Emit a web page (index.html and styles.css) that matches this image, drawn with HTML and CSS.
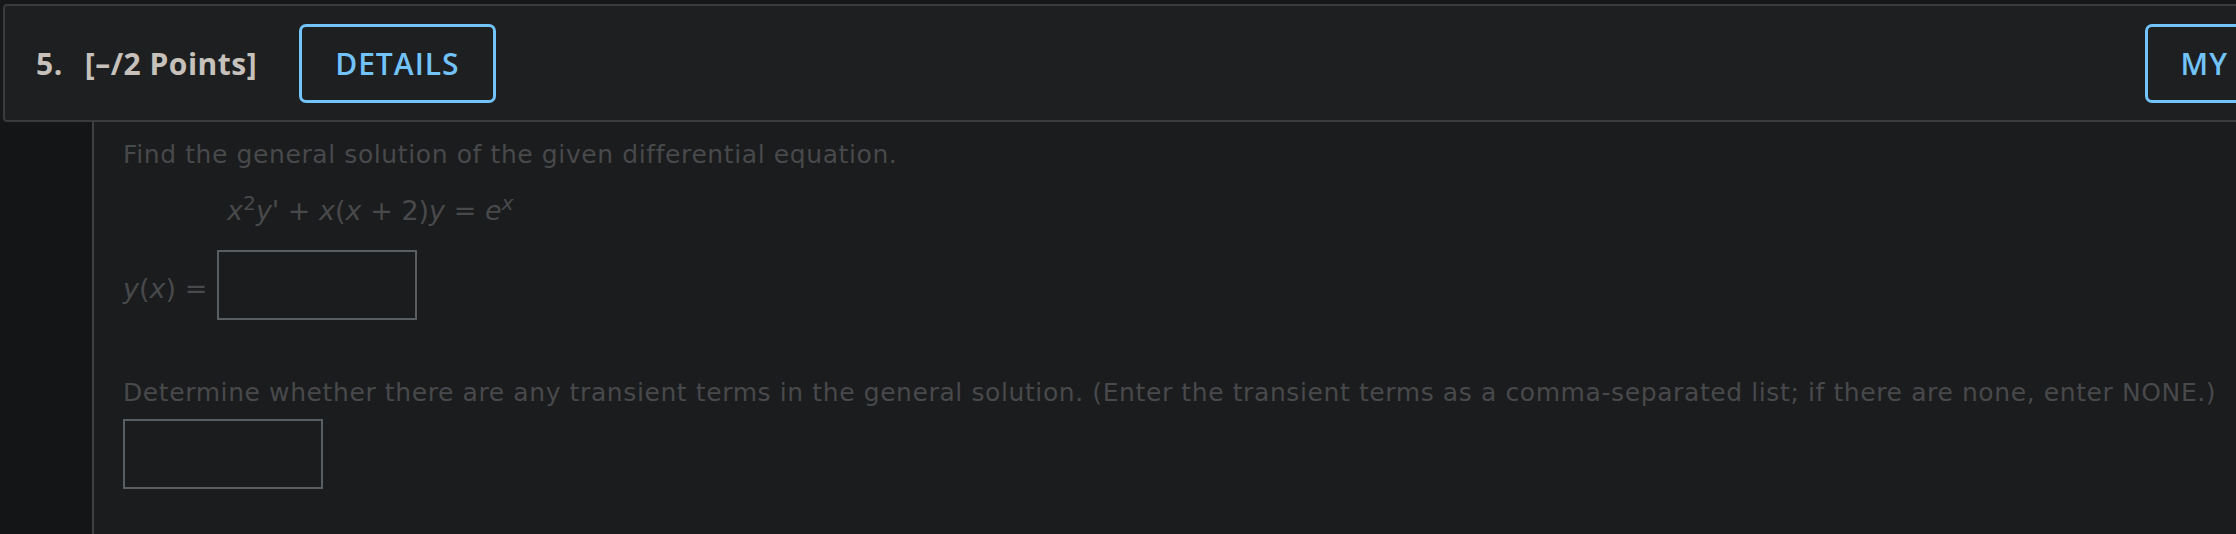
FILE: index.html
```html
<!DOCTYPE html>
<html lang="en">
<head>
  <meta charset="UTF-8">
  <meta name="viewport" content="width=device-width, initial-scale=1.0">
  <title>Question 5</title>
  <link rel="stylesheet" href="styles.css">
</head>
<body>

  <div class="question-head">
    <span class="q-number">5.</span>
    <span class="q-points">[–/2 Points]</span>
    <button class="head-btn details">DETAILS</button>
    <button class="head-btn notes">MY NOTES</button>
  </div>

  <div class="question-body">
    <div class="gutter"></div>

    <div class="content">
      <p class="prompt">Find the general solution of the given differential equation.</p>

      <p class="equation">
        <i>x</i><sup>2</sup><i>y</i>' + <i>x</i>(<i>x</i> + 2)<i>y</i> = <i>e</i><sup><i>x</i></sup>
      </p>

      <div class="answer-row">
        <span class="answer-label"><i>y</i>(<i>x</i>) =</span>
        <input type="text" class="answer-box">
      </div>

      <p class="prompt second">Determine whether there are any transient terms in the general solution. (Enter the transient terms as a comma-separated list; if there are none, enter NONE.)</p>
      <input type="text" class="answer-box">
    </div>
  </div>

</body>
</html>
```

FILE: styles.css
```css
body {
  margin: 0;
  background-color: #161719;
  overflow: hidden;
  font-family: "DejaVu Sans", Verdana, sans-serif;
}

/* Cabecera de la pregunta */
.question-head {
  box-sizing: border-box;
  width: 2410px;
  height: 118px;
  margin: 4px 0 0 3px;
  padding-left: 31px;
  display: flex;
  align-items: center;
  background-color: #1e1f21;
  border: 2px solid #3a3b3d;
  border-radius: 4px;
}

.q-number,
.q-points {
  font-family: "Open Sans", sans-serif;
  font-weight: 700;
  font-size: 30px;
  letter-spacing: 0.5px;
  color: #c6c1bb;
}

.q-points {
  margin-left: 22px;
}

.head-btn {
  box-sizing: border-box;
  height: 79px;
  padding: 0 33px;
  font-family: "Open Sans", sans-serif;
  font-weight: 600;
  font-size: 30px;
  letter-spacing: 1px;
  color: #72c3f9;
  background-color: transparent;
  border: 3px solid #72c3f9;
  border-radius: 7px;
}

.details {
  margin-left: 42px;
}

.notes {
  margin-left: auto;
  margin-right: 36px;
}

/* Cuerpo */
.question-body {
  display: flex;
  height: 412px;
}

.gutter {
  width: 92px;
  background-color: #141517;
  border-right: 2px solid #3d4144;
}

.content {
  flex: 1;
  padding: 18px 0 0 29px;
  background-color: #1b1c1e;
  color: #48494b;
  font-size: 25px;
  line-height: 30px;
}

.prompt {
  margin: 0;
  letter-spacing: 0.6px;
}

.equation {
  margin: 24px 0 0 104px;
  font-size: 27px;
  line-height: 34px;
}

.equation sup {
  font-size: 0.75em;
  line-height: 0;
  vertical-align: 0.5em;
}

.answer-row {
  display: flex;
  align-items: flex-end;
  gap: 10px;
  margin-top: 22px;
}

.answer-label {
  font-size: 27px;
  line-height: 34px;
  margin-bottom: 14px;
}

.answer-box {
  display: block;
  box-sizing: border-box;
  width: 200px;
  height: 70px;
  margin: 0;
  background-color: #1b1c1e;
  border: 2px solid #595e62;
}

.second {
  margin-top: 58px;
  margin-bottom: 11px;
}
```
